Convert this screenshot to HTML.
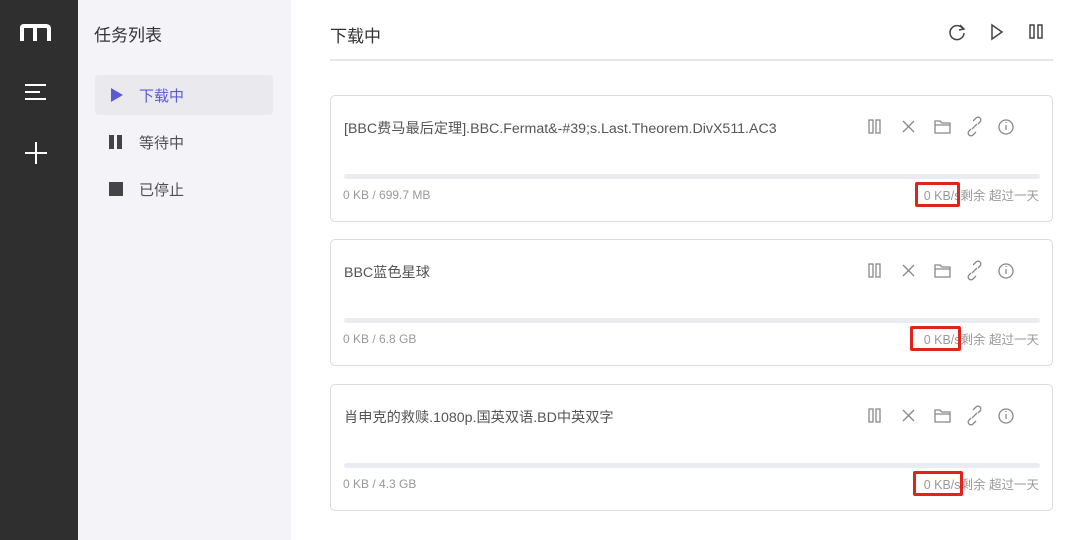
<!DOCTYPE html>
<html><head><meta charset="utf-8"><style>
*{margin:0;padding:0;box-sizing:border-box}
body{width:1080px;height:540px;overflow:hidden;font-family:"Liberation Sans","Noto Sans CJK SC",sans-serif;background:#fff;position:relative}
.nav{position:absolute;left:0;top:0;width:78px;height:540px;background:#2f2f2f}
.side{position:absolute;left:78px;top:0;width:213px;height:540px;background:#f4f4f8}
.abs{position:absolute}
.t{color:#333;font-size:17px}
.item{position:absolute;left:95px;width:178px;height:40px;border-radius:4px;font-size:15px;color:#505050}
.card{position:absolute;left:330px;width:723px;height:127px;border:1px solid #dcdce0;border-radius:5px}
.name{position:absolute;left:13px;top:22px;font-size:14.2px;color:#555}
.bar{position:absolute;left:13px;top:78px;width:696px;height:5px;background:#ebebf2;border-radius:3px}
.sz{position:absolute;left:12px;top:92px;font-size:12px;color:#999}
.rt{position:absolute;right:13px;top:89px;font-size:12.5px;color:#999}
.red{position:absolute;top:86px;width:45px;height:25px;border:3px solid #e0231c;border-radius:2px}
.ic{position:absolute;top:19px}
</style></head><body>
<div class="nav">
<svg class="abs" style="left:20px;top:24px" width="32" height="18"><path d="M2 17V4q0-2 2-2h22q3 0 3 3v12" fill="none" stroke="#fff" stroke-width="4"/><path d="M15 4v13" stroke="#fff" stroke-width="4"/></svg>
<svg class="abs" style="left:25px;top:84px" width="22" height="16"><path d="M0 1h21M0 8h15M0 15h21" stroke="#fff" stroke-width="2"/></svg>
<svg class="abs" style="left:25px;top:142px" width="22" height="22"><path d="M11 0v22M0 11h22" stroke="#fff" stroke-width="2"/></svg>
</div>
<div class="side"></div>
<div class="abs t" style="left:94px;top:21px">任务列表</div>
<div class="item" style="top:75px;background:#e9e9ee;color:#5b5bd6"><svg class="abs" style="left:16px;top:13px" width="12" height="14"><path d="M0 0L12 7L0 14Z" fill="#5b5bd6"/></svg><span class="abs" style="left:44px;top:10px">下载中</span></div>
<div class="item" style="top:122px"><svg class="abs" style="left:14px;top:13px" width="14" height="14"><rect x="0" width="5" height="14" fill="#444"/><rect x="8" width="5" height="14" fill="#444"/></svg><span class="abs" style="left:44px;top:10px">等待中</span></div>
<div class="item" style="top:169px"><svg class="abs" style="left:14px;top:13px" width="14" height="14"><rect width="14" height="14" fill="#444"/></svg><span class="abs" style="left:44px;top:10px">已停止</span></div>

<div class="abs t" style="left:330px;top:22px">下载中</div>
<svg class="abs" style="left:948px;top:23px" width="100" height="18">
<path d="M15 6A7 7 0 1 0 16 10" fill="none" stroke="#444" stroke-width="1.5"/><path d="M12 2l4 4-5 1" fill="none" stroke="#444" stroke-width="1.5"/>
<path d="M44 2L54 9L44 16Z" fill="none" stroke="#444" stroke-width="1.5"/>
<rect x="82" y="2" width="4" height="13" fill="none" stroke="#444" stroke-width="1.5"/><rect x="90" y="2" width="4" height="13" fill="none" stroke="#444" stroke-width="1.5"/>
</svg>
<div class="abs" style="left:330px;top:59px;width:723px;height:2px;background:#e6e6ea"></div>

<div class="card" style="top:95px">
<div class="name">[BBC费马最后定理].BBC.Fermat&amp;-#39;s.Last.Theorem.DivX511.AC3</div>
<svg class="ic" style="left:535px" width="180" height="24"><g fill="none" stroke="#888" stroke-width="1.3">
<rect x="3" y="5" width="4" height="13"/><rect x="10" y="5" width="4" height="13"/>
<path d="M37 6l11 11M48 6L37 17"/>
<path d="M69 6h5l2 2h8v10H69Z M69 10h15"/>
<path d="M105 14l-2 2a2.5 2.5 0 0 0 4 4l3-3M112 9l2-2a2.5 2.5 0 0 0-4-4l-3 3M106 14l5-5"/>
<circle cx="140" cy="12" r="7"/><path d="M140 10v5M140 7v1"/></g></svg>
<div class="bar"></div>
<div class="sz">0 KB / 699.7 MB</div>
<div class="rt">0 KB/s剩余 超过一天</div>
<div class="red" style="left:584px"></div>
</div>
<div class="card" style="top:239px">
<div class="name">BBC蓝色星球</div>
<svg class="ic" style="left:535px" width="180" height="24"><g fill="none" stroke="#888" stroke-width="1.3">
<rect x="3" y="5" width="4" height="13"/><rect x="10" y="5" width="4" height="13"/>
<path d="M37 6l11 11M48 6L37 17"/>
<path d="M69 6h5l2 2h8v10H69Z M69 10h15"/>
<path d="M105 14l-2 2a2.5 2.5 0 0 0 4 4l3-3M112 9l2-2a2.5 2.5 0 0 0-4-4l-3 3M106 14l5-5"/>
<circle cx="140" cy="12" r="7"/><path d="M140 10v5M140 7v1"/></g></svg>
<div class="bar"></div>
<div class="sz">0 KB / 6.8 GB</div>
<div class="rt">0 KB/s剩余 超过一天</div>
<div class="red" style="left:579px;width:51px"></div>
</div>
<div class="card" style="top:384px">
<div class="name">肖申克的救赎.1080p.国英双语.BD中英双字</div>
<svg class="ic" style="left:535px" width="180" height="24"><g fill="none" stroke="#888" stroke-width="1.3">
<rect x="3" y="5" width="4" height="13"/><rect x="10" y="5" width="4" height="13"/>
<path d="M37 6l11 11M48 6L37 17"/>
<path d="M69 6h5l2 2h8v10H69Z M69 10h15"/>
<path d="M105 14l-2 2a2.5 2.5 0 0 0 4 4l3-3M112 9l2-2a2.5 2.5 0 0 0-4-4l-3 3M106 14l5-5"/>
<circle cx="140" cy="12" r="7"/><path d="M140 10v5M140 7v1"/></g></svg>
<div class="bar"></div>
<div class="sz">0 KB / 4.3 GB</div>
<div class="rt">0 KB/s剩余 超过一天</div>
<div class="red" style="left:582px;width:50px"></div>
</div>
</body></html>
